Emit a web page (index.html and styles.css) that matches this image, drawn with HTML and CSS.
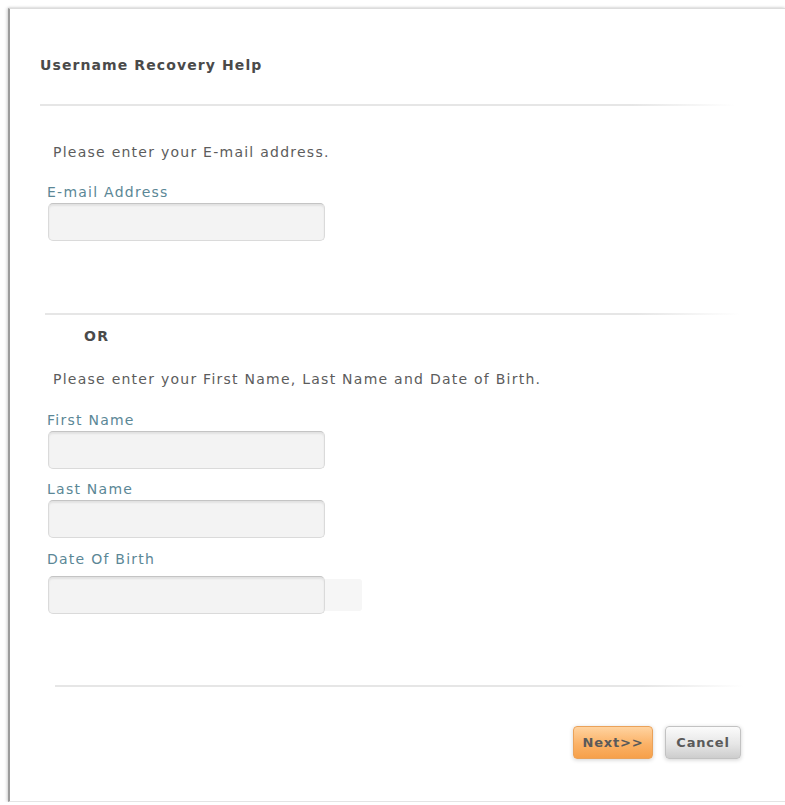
FILE: index.html
```html
<!DOCTYPE html>
<html lang="en">
<head>
<meta charset="utf-8">
<title>Username Recovery Help</title>
<link rel="stylesheet" href="styles.css">
</head>
<body>
<div class="panel">
  <h1 class="title">Username Recovery Help</h1>
  <div class="rule rule-top"></div>

  <p class="intro intro-email">Please enter your E-mail address.</p>
  <label class="field-label lbl-email" for="email">E-mail Address</label>
  <input class="field" id="email" type="text">

  <div class="rule rule-mid"></div>

  <div class="or">OR</div>
  <p class="intro intro-name">Please enter your First Name, Last Name and Date of Birth.</p>

  <label class="field-label lbl-first" for="first">First Name</label>
  <input class="field" id="first" type="text">

  <label class="field-label lbl-last" for="last">Last Name</label>
  <input class="field" id="last" type="text">

  <label class="field-label lbl-dob" for="dob">Date Of Birth</label>
  <div class="dob-row">
    <input class="field" id="dob" type="text">
    <span class="dob-addon"></span>
  </div>

  <div class="rule rule-bottom"></div>

  <div class="actions">
    <button class="btn btn-next" type="button">Next&gt;&gt;</button>
    <button class="btn btn-cancel" type="button">Cancel</button>
  </div>
</div>
</body>
</html>
```
FILE: styles.css
```css
html, body {
  margin: 0;
  padding: 0;
  background: #ffffff;
}

body {
  font-family: "DejaVu Sans", Verdana, sans-serif;
  font-size: 14px;
  letter-spacing: 1.25px;
  color: #555555;
}

.panel {
  margin: 8px 0 0 8px;
  height: 794px;
  box-sizing: border-box;
  border-top: 1px solid #dcdcdc;
  border-left: 2px solid #9c9c9c;
  border-bottom: 1px solid #e4e4e4;
  box-shadow: -1px 0 3px rgba(0, 0, 0, 0.18), 0 -1px 2px rgba(0, 0, 0, 0.06);
  display: flex;
  flex-direction: column;
  align-items: flex-start;
}

.title {
  margin: 48px 0 0 30px;
  font-size: 14px;
  letter-spacing: 1.1px;
  line-height: 16px;
  font-weight: bold;
  color: #4a4a4a;
}

.rule {
  height: 2px;
  background: linear-gradient(to right, #e6e6e6 0%, #e6e6e6 85%, rgba(230, 230, 230, 0) 100%);
}

.rule-top {
  margin: 31px 0 0 30px;
  width: 695px;
}

.rule-mid {
  margin: 72px 0 0 35px;
  width: 695px;
}

.rule-bottom {
  margin: 71px 0 0 45px;
  width: 690px;
}

.intro {
  margin: 0;
  line-height: 16px;
  color: #5c5c5c;
}

.intro-email {
  margin: 38px 0 0 43px;
}

.intro-name {
  margin: 27px 0 0 43px;
}

.or {
  margin: 13px 0 0 74px;
  line-height: 16px;
  font-weight: bold;
  color: #4a4a4a;
}

.field-label {
  display: block;
  margin-left: 37px;
  line-height: 16px;
  color: #5b8796;
}

.lbl-email { margin-top: 24px; }
.lbl-first { margin-top: 25px; }
.lbl-last  { margin-top: 12px; }
.lbl-dob   { margin-top: 13px; }

.field {
  display: block;
  box-sizing: border-box;
  width: 277px;
  height: 38px;
  margin: 3px 0 0 38px;
  padding: 0 8px;
  border: 1px solid #dadada;
  border-top-color: #c4c4c4;
  border-radius: 5px;
  background: #f3f3f3;
  box-shadow: inset 0 2px 2px rgba(0, 0, 0, 0.07);
  font: inherit;
  color: #444;
  outline: none;
}

.dob-row {
  display: flex;
  align-items: center;
  margin-top: 9px;
}

.dob-row .field {
  margin-top: 0;
}

.dob-addon {
  width: 37px;
  height: 32px;
  background: #f6f6f6;
  border-radius: 0 3px 3px 0;
}

.actions {
  display: flex;
  gap: 12px;
  margin: 39px 0 0 563px;
}

.btn {
  box-sizing: border-box;
  height: 33px;
  padding: 0;
  border-radius: 4px;
  font-family: "DejaVu Sans", Verdana, sans-serif;
  font-size: 13px;
  letter-spacing: 0.8px;
  font-weight: bold;
  color: #5a5a5a;
  cursor: pointer;
  box-shadow: 0 1px 4px rgba(0, 0, 0, 0.18);
}

.btn-next {
  width: 80px;
  border: 1px solid #eaa25a;
  background: linear-gradient(to bottom, #ffd3a0 0%, #fbb267 55%, #f6a04a 100%);
}

.btn-cancel {
  width: 76px;
  border: 1px solid #c2c2c2;
  background: linear-gradient(to bottom, #fbfbfb 0%, #e6e6e6 55%, #cdcdcd 100%);
}
```
